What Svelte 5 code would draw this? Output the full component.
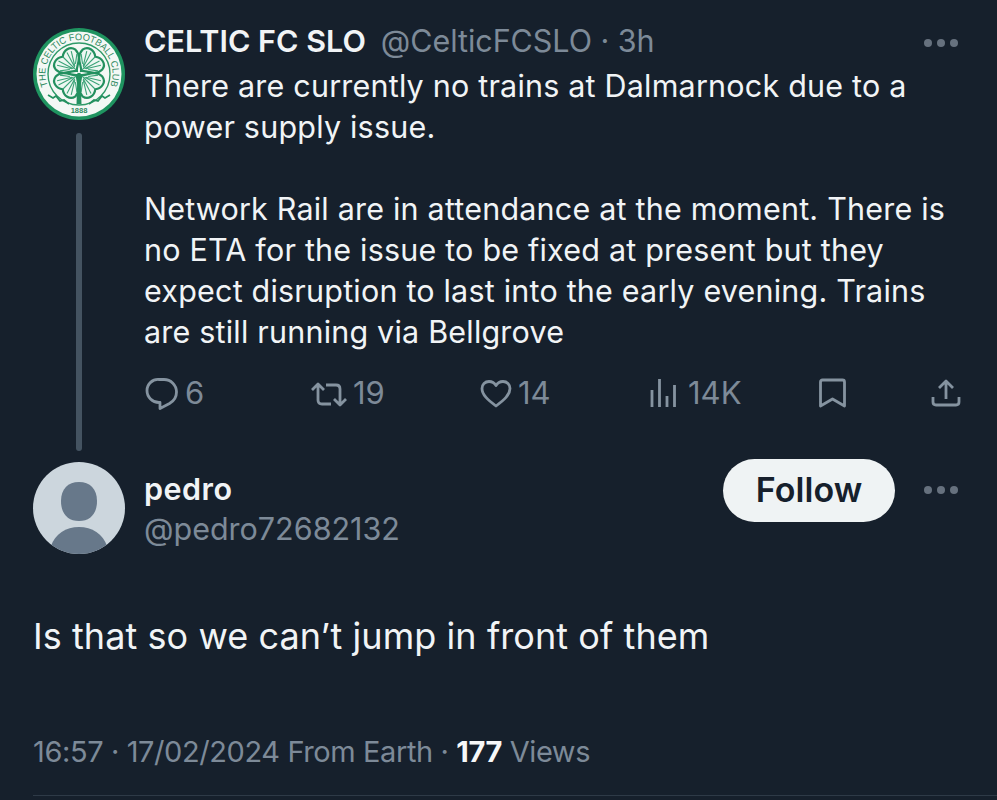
<script>
  const stats = [
    { id: 'talk', n: '6' },
    { id: 'rt', n: '19' },
    { id: 'like', n: '14' },
    { id: 'views', n: '14K' }
  ];
  const leaves = [45, 135, 225, 315];
</script>

<main class="page">
  <section class="parent">
    <div class="rail">
      <svg class="logo" viewBox="0 0 92 92" aria-label="Celtic FC crest">
        <defs>
          <path id="arc" d="M14.500 57 A33.500 33.500 0 1 1 77.500 57" />
        </defs>
        <circle cx="46" cy="46" r="46" fill="#1f9460" />
        <circle cx="46" cy="46" r="42.500" fill="#f4f8f5" />
        <circle cx="46" cy="46" r="31" fill="none" stroke="#2f9a69" stroke-width="1.400" />
        <text class="crest" fill="#2f8a60"><textPath href="#arc" startOffset="50%" text-anchor="middle" textLength="130" lengthAdjust="spacingAndGlyphs">THE CELTIC FOOTBALL CLUB</textPath></text>
        <g transform="translate(46 45)">
          {#each leaves as a}
            <g transform="rotate({a})">
              <path d="M0 -3 C-3 -7 -14 -9 -14 -19 C-13 -26 -5 -27 0 -23 C5 -27 13 -26 14 -19 C14 -9 3 -7 0 -3Z" fill="#eef7f2" stroke="#23905f" stroke-width="2.200" />
              <path d="M0 -4 V-23 M-2 -8 L-10 -21 M2 -8 L10 -21 M-4 -9 L-12 -15 M4 -9 L12 -15 M-1 -7 L-6 -23 M1 -7 L6 -23" stroke="#3aa377" stroke-width="1.100" fill="none" />
            </g>
          {/each}
          <path d="M-1.500 0 L-2.500 31 L2.500 31 L1.500 0Z" fill="#23905f" />
        </g>
        <path d="M15 67 l5 3 3 -2 4 5 4 -1 5 4 M77 67 l-5 3 -3 -2 -4 5 -4 -1 -5 4" fill="none" stroke="#23905f" stroke-width="1.700" />
        <text class="year" x="46" y="85" text-anchor="middle" fill="#2f8a60">1888</text>
      </svg>
      <div class="line"></div>
    </div>
    <div class="body">
      <header class="head">
        <span class="name">CELTIC FC SLO</span>
        <span class="handle">@CelticFCSLO · 3h</span>
        <svg class="dots" viewBox="0 0 36 10"><circle cx="5" cy="5" r="4" /><circle cx="18" cy="5" r="4" /><circle cx="31" cy="5" r="4" /></svg>
      </header>
      <p class="text">There are currently no trains at Dalmarnock due to a<br />power supply issue.<br /><br />Network Rail are in attendance at the moment. There is<br />no ETA for the issue to be fixed at present but they<br />expect disruption to last into the early evening. Trains<br />are still running via Bellgrove</p>
      <div class="actions">
        {#each stats as s}
          <div class="stat">
            {#if s.id === 'talk'}
              <svg viewBox="0 0 34 34" class="ico talk-ico">
                <path d="M14 3.500h5a12.500 12.500 0 0 1 12.500 12.500c0 6-3.500 9.500-7 11.500l-9.500 5v-6h-1a12 12 0 0 1 -12-12a11 11 0 0 1 12-11Z" />
              </svg>
            {:else if s.id === 'rt'}
              <svg viewBox="0 0 36 32" class="ico rt-ico">
                <path d="M7 7V23c0 2.500 1.500 4 4 4H20M1 13l6-6 6 6M29 28V12c0-2.500-1.500-4-4-4H15M23 22l6 6 6-6" />
              </svg>
            {:else if s.id === 'like'}
              <svg viewBox="0 0 32 32" class="ico">
                <path d="M16 29C8 23 2 18 2 11.500c0-4 3-7 7-7 3 0 5.500 1.500 7 4 1.500-2.500 4-4 7-4 4 0 7 3 7 7C30 18 24 23 16 29Z" />
              </svg>
            {:else}
              <svg viewBox="0 0 28 32" class="ico views-ico">
                <path d="M2 13v17M9.500 2v28M17 19v11M24.500 8v22" />
              </svg>
            {/if}
            <span>{s.n}</span>
          </div>
        {/each}
        <svg viewBox="0 0 28 32" class="ico mark"><path d="M1.500 5c0-1.500.7-2 2-2h20c1.300 0 2 .5 2 2V29l-12-7-12 7Z" /></svg>
        <svg viewBox="0 0 30 30" class="ico share"><path d="M15 21V3M8 10l7-7 7 7M2 19v5c0 2 1 3 3 3h20c2 0 3-1 3-3v-5" /></svg>
      </div>
    </div>
  </section>

  <section class="author">
    <svg class="avatar" viewBox="0 0 92 92" aria-label="pedro avatar">
      <defs><clipPath id="round"><circle cx="46" cy="46" r="46" /></clipPath></defs>
      <circle cx="46" cy="46" r="46" fill="#ccd6dd" />
      <g clip-path="url(#round)" fill="#67788a">
        <path d="M46 20c11 0 18 7 18 19 0 13-7 20-18 20s-18-7-18-20c0-12 7-19 18-19Z" />
        <path d="M18 84c4-12 15-19 28-19s24 7 28 19c-7 6-17 9-28 9s-21-3-28-9Z" />
      </g>
    </svg>
    <div class="who">
      <strong>pedro</strong>
      <span>@pedro72682132</span>
    </div>
    <button class="follow">Follow</button>
    <svg class="dots" viewBox="0 0 36 10"><circle cx="5" cy="5" r="4" /><circle cx="18" cy="5" r="4" /><circle cx="31" cy="5" r="4" /></svg>
  </section>

  <p class="reply">Is that so we can’t jump in front of them</p>

  <footer class="meta">16:57 · 17/02/2024 From Earth · <b>177</b> Views</footer>
  <div class="rule"></div>
</main>

<style>
  :global(body) {
    margin: 0;
    background: #16202c;
  }
  .page {
    box-sizing: border-box;
    height: 800px;
    padding: 27px 38px 0 33px;
    background: #16202c;
    color: #f1f4f6;
    font-family: Inter, "Liberation Sans", sans-serif;
    overflow: hidden;
  }
  .parent {
    display: flex;
    gap: 19px;
    height: 424px;
  }
  .rail {
    display: flex;
    flex-direction: column;
    align-items: center;
    flex: none;
    width: 92px;
  }
  .logo {
    width: 92px;
    height: 92px;
    flex: none;
    margin-top: 1px;
  }
  .crest {
    font: 400 9.500px "Liberation Sans", sans-serif;
  }
  .year {
    font: 700 7.500px "Liberation Sans", sans-serif;
  }
  .line {
    width: 6px;
    flex: 1;
    margin-top: 13px;
    border-radius: 3px;
    background: #445361;
  }
  .body {
    flex: 1;
    min-width: 0;
  }
  .head {
    display: flex;
    align-items: center;
    height: 30px;
    margin-top: -1px;
    font-size: 30.500px;
    line-height: 30px;
    white-space: nowrap;
  }
  .name {
    font-weight: 600;
  }
  .handle {
    margin-left: 15px;
    color: #7d8a98;
    letter-spacing: -0.05px;
  }
  .dots {
    width: 36px;
    height: 10px;
    fill: #66717e;
    margin-left: auto;
  }
  .head .dots {
    position: relative;
    top: 2px;
  }
  .text {
    margin: 9px 0 0;
    font-size: 30.500px;
    line-height: 41px;
    white-space: nowrap;
    letter-spacing: 0.2px;
  }
  .actions {
    display: grid;
    grid-template-columns: 167px 169px 170px 169px 1fr auto;
    align-items: center;
    margin-top: 22px;
    height: 36px;
    color: #7d8a98;
    font-size: 31px;
  }
  .stat {
    display: flex;
    align-items: center;
    gap: 6px;
  }
  .ico {
    display: block;
    flex: none;
    width: 32px;
    height: 32px;
    fill: none;
    stroke: #8593a0;
    stroke-width: 2.800;
    stroke-linejoin: round;
  }
  .talk-ico {
    width: 34px;
    height: 34px;
    margin-left: 1px;
  }
  .rt-ico {
    width: 36px;
  }
  .views-ico {
    width: 28px;
    margin-right: 4px;
  }
  .mark {
    width: 28px;
  }
  .share {
    width: 30px;
    height: 30px;
    margin-right: -2px;
  }
  .author {
    display: flex;
    align-items: flex-start;
    margin-top: 11px;
  }
  .avatar {
    width: 92px;
    height: 92px;
    flex: none;
  }
  .who {
    display: flex;
    flex-direction: column;
    gap: 1px;
    margin-left: 19px;
    margin-top: 7px;
    font-size: 30.500px;
    line-height: 39px;
    flex: 1;
  }
  .who strong {
    font-weight: 600;
    letter-spacing: 0.5px;
  }
  .who span {
    color: #7d8a98;
  }
  .follow {
    flex: none;
    width: 172px;
    height: 63px;
    margin-top: -3px;
    border: 0;
    padding: 0 0 2px;
    border-radius: 32px;
    background: #eff3f4;
    color: #16202c;
    font: 600 34px Inter, "Liberation Sans", sans-serif;
    letter-spacing: 0.1px;
  }
  .author .dots {
    margin: 23px 0 0 28px;
    flex: none;
  }
  .reply {
    margin: 59px 0 0;
    font-size: 36px;
    line-height: 46px;
    letter-spacing: 0.07px;
  }
  .meta {
    margin-top: 73px;
    font-size: 29px;
    line-height: 40px;
    color: #7d8a98;
    white-space: pre;
    letter-spacing: -0.4px;
  }
  .meta b {
    color: #f6f8f9;
    font-weight: 700;
  }
  .rule {
    height: 1px;
    margin-top: 23px;
    margin-right: -38px;
    background: #2e3a47;
  }
</style>
